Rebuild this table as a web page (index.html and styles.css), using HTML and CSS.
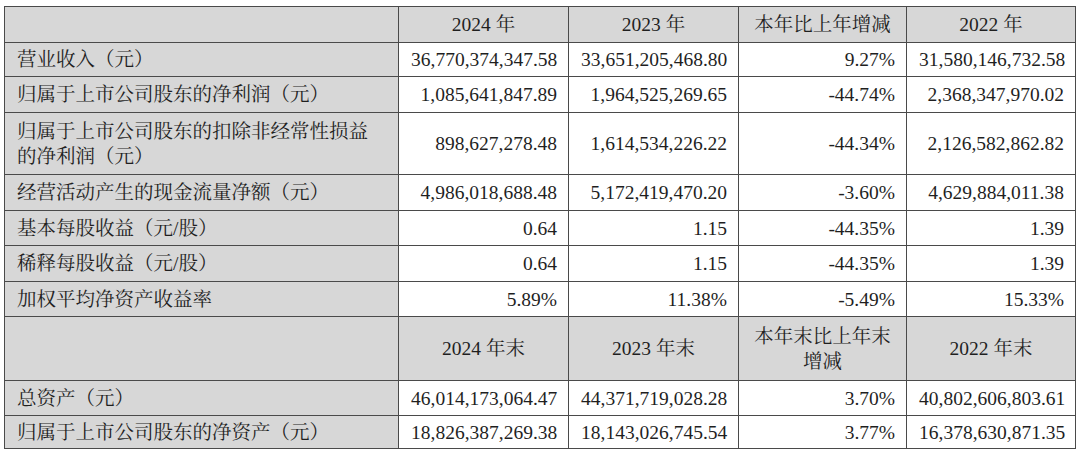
FILE: index.html
```html
<!DOCTYPE html>
<html lang="zh-CN">
<head>
<meta charset="utf-8">
<title>主要会计数据</title>
<link rel="stylesheet" href="styles.css">
</head>
<body>
<table class="fin">
  <colgroup>
    <col class="c-label">
    <col class="c-num">
    <col class="c-num">
    <col class="c-chg">
    <col class="c-num2">
  </colgroup>
  <tbody>
    <tr class="head h36">
      <td></td>
      <td>2024 年</td>
      <td>2023 年</td>
      <td>本年比上年增减</td>
      <td>2022 年</td>
    </tr>
    <tr class="h34">
      <td class="label">营业收入（元）</td>
      <td>36,770,374,347.58</td>
      <td>33,651,205,468.80</td>
      <td>9.27%</td>
      <td>31,580,146,732.58</td>
    </tr>
    <tr class="h36">
      <td class="label">归属于上市公司股东的净利润（元）</td>
      <td>1,085,641,847.89</td>
      <td>1,964,525,269.65</td>
      <td>-44.74%</td>
      <td>2,368,347,970.02</td>
    </tr>
    <tr class="h62">
      <td class="label">归属于上市公司股东的扣除非经常性损益<br>的净利润（元）</td>
      <td>898,627,278.48</td>
      <td>1,614,534,226.22</td>
      <td>-44.34%</td>
      <td>2,126,582,862.82</td>
    </tr>
    <tr class="h36">
      <td class="label">经营活动产生的现金流量净额（元）</td>
      <td>4,986,018,688.48</td>
      <td>5,172,419,470.20</td>
      <td>-3.60%</td>
      <td>4,629,884,011.38</td>
    </tr>
    <tr class="h35">
      <td class="label">基本每股收益（元/股）</td>
      <td>0.64</td>
      <td>1.15</td>
      <td>-44.35%</td>
      <td>1.39</td>
    </tr>
    <tr class="h36">
      <td class="label">稀释每股收益（元/股）</td>
      <td>0.64</td>
      <td>1.15</td>
      <td>-44.35%</td>
      <td>1.39</td>
    </tr>
    <tr class="h35">
      <td class="label">加权平均净资产收益率</td>
      <td>5.89%</td>
      <td>11.38%</td>
      <td>-5.49%</td>
      <td>15.33%</td>
    </tr>
    <tr class="head h64">
      <td></td>
      <td>2024 年末</td>
      <td>2023 年末</td>
      <td>本年末比上年末<br>增减</td>
      <td>2022 年末</td>
    </tr>
    <tr class="h35">
      <td class="label">总资产（元）</td>
      <td>46,014,173,064.47</td>
      <td>44,371,719,028.28</td>
      <td>3.70%</td>
      <td>40,802,606,803.61</td>
    </tr>
    <tr class="h33">
      <td class="label">归属于上市公司股东的净资产（元）</td>
      <td>18,826,387,269.38</td>
      <td>18,143,026,745.54</td>
      <td>3.77%</td>
      <td>16,378,630,871.35</td>
    </tr>
  </tbody>
</table>
</body>
</html>
```

FILE: styles.css
```css
html, body {
  margin: 0;
  padding: 0;
  background: #ffffff;
}

body {
  padding: 6px 0 0 4px;
}

.fin {
  border-collapse: collapse;
  table-layout: fixed;
  width: 1071px;
  font-family: "Liberation Serif", "Noto Serif CJK SC", "Noto Sans CJK SC", serif;
  font-size: 19.5px;
  line-height: 25px;
  color: #1f1f1f;
}

.c-label { width: 394px; }
.c-num { width: 170px; }
.c-chg { width: 168px; }
.c-num2 { width: 169px; }

.fin td {
  border: 1px solid #4a4a4a;
  padding: 0 11px 0 12px;
  text-align: right;
  vertical-align: middle;
  white-space: nowrap;
}

.fin td.label {
  text-align: left;
  background: #d7d7d7;
}

.fin .head td {
  background: #d7d7d7;
  text-align: center;
  padding: 0 12px;
}

.h33 { height: 33px; }
.h34 { height: 34px; }
.h35 { height: 35px; }
.h36 { height: 36px; }
.h62 { height: 62px; }
.h64 { height: 64px; }
```
